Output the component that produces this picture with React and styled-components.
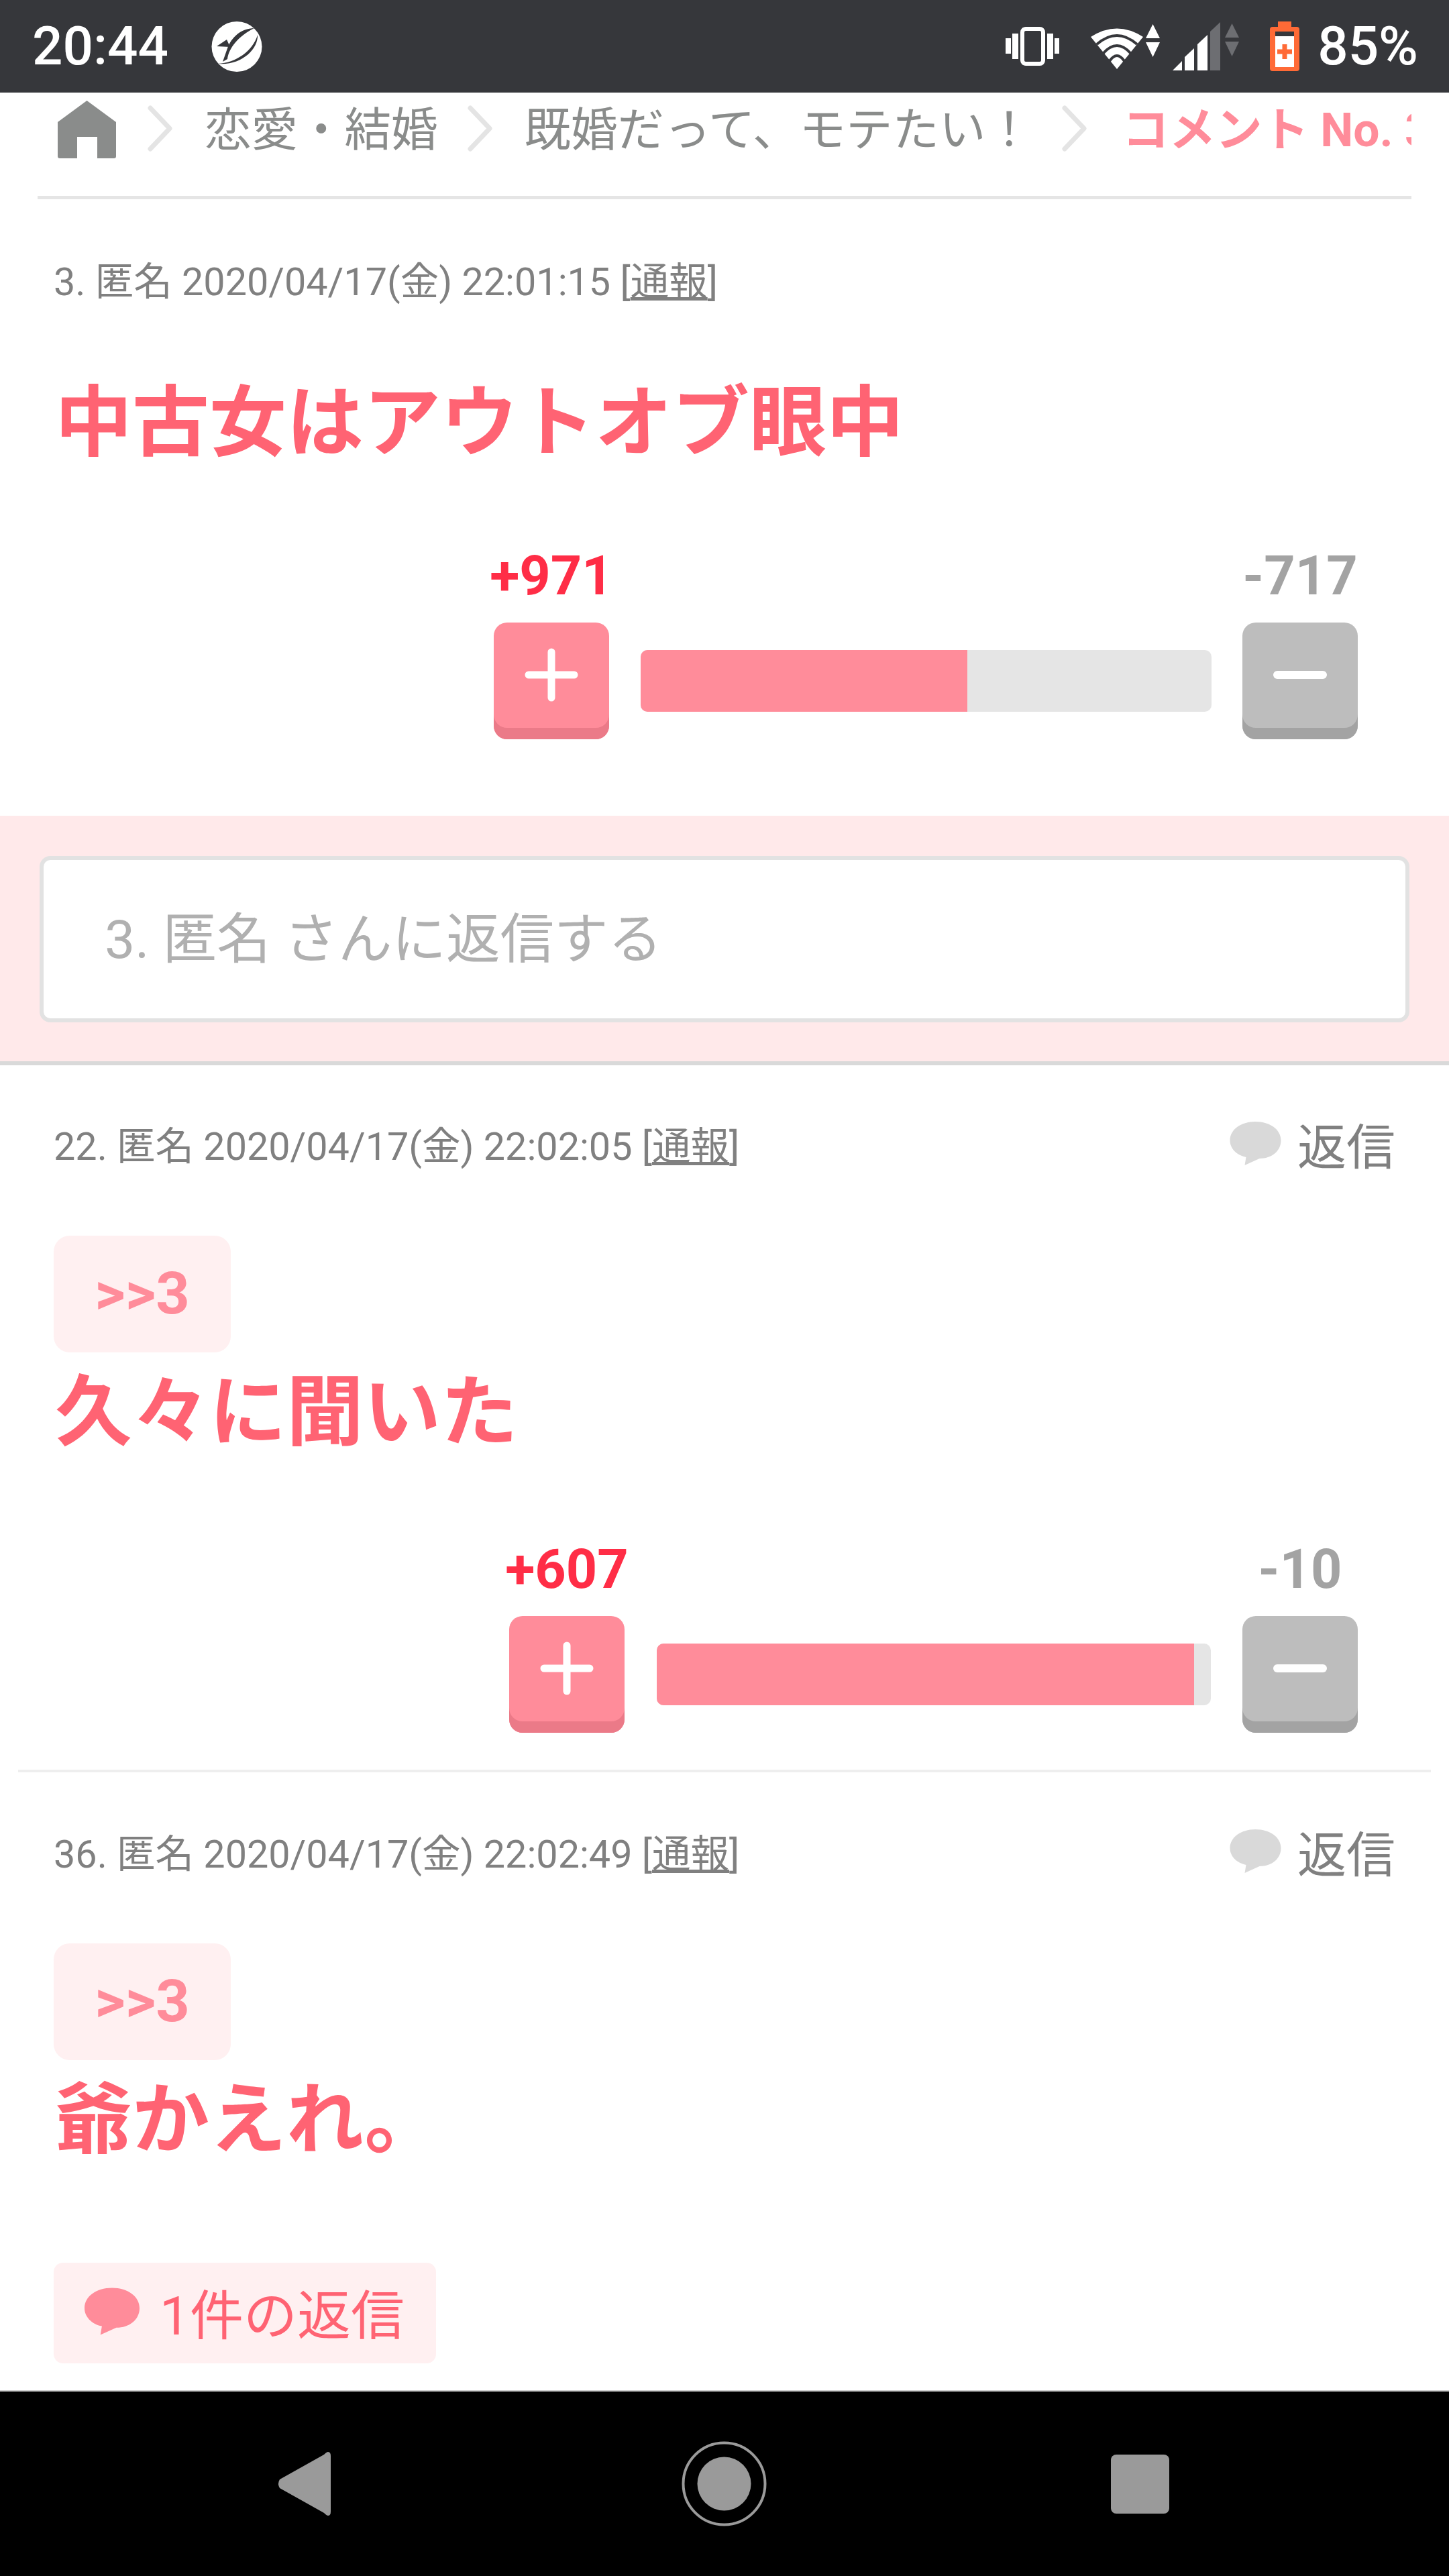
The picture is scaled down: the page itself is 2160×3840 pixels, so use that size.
import React from 'react';
import styled, {createGlobalStyle} from 'styled-components';

const GlobalStyle = createGlobalStyle`
	html, body {
		margin: 0;
		padding: 0;
		background: #fff;
	}
	* {
		box-sizing: border-box;
	}
`;

const Screen = styled.div`
	width: 2160px;
	height: 3840px;
	display: flex;
	flex-direction: column;
	overflow: hidden;
	font-family: Roboto, "Noto Sans CJK JP", sans-serif;
`;
const StatusBar = styled.div`
	height: 138px;
	flex: none;
	display: flex;
	align-items: center;
	padding: 0 46px 0 48px;
	background: #36373b;
	color: #fff;
	font-size: 80px;
	font-weight: 500;
`;
const StatusText = styled.span`
	line-height: 1;
`;
const LogoMark = styled.svg`
	margin-left: 64px;
`;
const StatusIcons = styled.div`
	margin-left: auto;
	display: flex;
	align-items: center;
`;
const StatusIcon = styled.svg`
	margin-right: ${p => p.$right || 0}px;
`;
const Main = styled.div`
	flex: 1;
	min-height: 0;
	overflow: hidden;
	background: #fff;
`;
const Breadcrumb = styled.nav`
	height: 159px;
	margin: 0 56px;
	padding: 10px 0 0 30px;
	display: flex;
	align-items: flex-start;
	overflow: hidden;
	border-bottom: 5px solid #e5e5e5;
	font-size: 69.5px;
	line-height: 86px;
	white-space: nowrap;
	color: #8a8c8b;
`;
const HomeMark = styled.svg`
	flex: none;
	margin: 2px 3px 0 0;
`;
const Crumb = styled.span`
	flex: none;
	margin: 4px 0 0 47px;
`;
const CurrentCrumb = styled(Crumb)`
	margin-left: 52px;
	font-weight: 700;
	color: #ff8c9a;
`;
const CrumbArrow = styled.svg`
	flex: none;
	margin: 9px 0 0 44px;
`;
const Comment = styled.section`
	padding: ${p => p.$top}px 80px 0 80px;
`;
const Meta = styled.div`
	display: flex;
	justify-content: space-between;
	align-items: center;
	height: 66px;
	font-size: 57.500px;
	color: #808080;
	white-space: nowrap;
`;
const Report = styled.span`
	text-decoration: underline;
`;
const ReplyLink = styled.span`
	display: flex;
	align-items: center;
	gap: 24px;
	font-size: 73px;
	color: #808080;
`;
const Quote = styled.div`
	width: 264px;
	height: 174px;
	margin-top: 105px;
	display: flex;
	align-items: center;
	justify-content: center;
	padding-bottom: 3px;
	border-radius: 24px;
	background: #fff0f1;
	color: #ff8c9a;
	font-size: 88px;
	font-weight: 700;
`;
const Body = styled.div`
	margin-top: ${p => p.$top}px;
	padding-left: 2px;
	font-size: 115px;
	line-height: 122px;
	font-weight: 700;
	color: #ff6373;
	white-space: nowrap;
`;
const Votes = styled.div`
	width: ${p => p.$width}px;
	margin: ${p => p.$top}px 56px 0 auto;
`;
const Counts = styled.div`
	display: flex;
	justify-content: space-between;
	font-size: 81px;
	line-height: 84px;
	font-weight: 700;
`;
const Count = styled.span`
	width: 172px;
	display: flex;
	justify-content: center;
	white-space: nowrap;
	color: ${p => p.$color};
`;
const VoteRow = styled.div`
	margin-top: 27px;
	display: flex;
	align-items: center;
	justify-content: space-between;
`;
const VoteButton = styled.div`
	width: 172px;
	height: 174px;
	flex: none;
	display: flex;
	align-items: center;
	justify-content: center;
	padding-bottom: 18px;
	border-radius: 20px;
	background: ${p => p.$color};
	box-shadow: inset 0 -17px 0 ${p => p.$shade};
`;
const Bar = styled.div`
	width: ${p => p.$width}px;
	height: 92px;
	overflow: hidden;
	border-radius: 10px;
	background: #e5e5e5;
`;
const BarFill = styled.div`
	height: 100%;
	background: #ff8c9a;
`;
const ReplyBand = styled.div`
	margin-top: 114px;
	padding: 60px 59px 58px;
	background: #ffe9ea;
	border-bottom: 6px solid #d9d9d9;
`;
const ReplyInput = styled.div`
	height: 248px;
	display: flex;
	align-items: center;
	padding: 0 0 14px 91px;
	background: #fff;
	border: 6px solid #e2e2e2;
	border-radius: 16px;
	font-size: 80.500px;
	color: #b0b0b0;
`;
const Divider = styled.hr`
	margin: 55px 27px 0;
	border: none;
	border-top: 4px solid #eeeeee;
`;
const RepliesPill = styled.div`
	width: 570px;
	height: 150px;
	margin-top: 151px;
	display: flex;
	align-items: center;
	gap: 30px;
	padding: 0 0 6px 46px;
	border-radius: 14px;
	background: #fff0f1;
	color: #ff6373;
	font-size: 80px;
`;
const NavBar = styled.div`
	height: 277px;
	flex: none;
	display: flex;
	align-items: center;
	background: #000;
	border-top: 2px solid #cfcfcf;
`;
const NavIcon = styled.svg`
	margin-left: ${p => p.$left}px;
`;

const Logo = () => (
	<LogoMark width="76" height="75" viewBox="0 0 76 75">
		<circle cx="38" cy="37.500" r="37.500" fill="#fff" />
		<path d="M10 63C36 62 62 44 69 20C70 42 44 66 10 63Z" fill="#36373b" />
		<path d="M64 10C44 10 30 24 24 40L17 60L24 56C26 40 40 22 64 10Z" fill="#36373b" />
		<path d="M8 37L23 27L28 38Z" fill="#36373b" />
	</LogoMark>
);

const VibrateIcon = () => (
	<StatusIcon width="80" height="58" viewBox="0 0 80 58" $right={47}>
		<rect x="25" y="3" width="31" height="52" rx="5" fill="none" stroke="#fff" strokeWidth="6" />
		<path d="M10 10H19V48H10ZM0 17H8V40H0ZM62 10H71V48H62ZM73 17H80V40H73Z" fill="#fff" />
	</StatusIcon>
);

const WifiIcon = () => (
	<StatusIcon width="103" height="67" viewBox="0 0 103 67" $right={19}>
		<path d="M0 19Q39 -6 78 19L39 67Z" fill="#fff" />
		<path d="M9 30Q39 4 69 30M18 44Q39 20 60 44M28 55Q39 39 50 55" fill="none" stroke="#36373b" strokeWidth="4" />
		<path d="M92.500 0L103 21H82ZM92.500 49L103 27H82Z" fill="#fff" />
	</StatusIcon>
);

const SignalIcon = () => (
	<StatusIcon width="99" height="72" viewBox="0 0 99 72" $right={46}>
		<path d="M0 72L14 58V72ZM18 52L32 39V72H18ZM37 33L52 19V72H37Z" fill="#fff" />
		<path d="M56 14L71 0V72H56Z" fill="#6d6e72" />
		<path d="M88.500 2L99 23H78ZM88.500 51L99 29H78Z" fill="#6d6e72" />
	</StatusIcon>
);

const BatteryIcon = () => (
	<StatusIcon width="44" height="74" viewBox="0 0 44 74" $right={27}>
		<path d="M12 0H32V8H40Q44 8 44 12V70Q44 74 40 74H4Q0 74 0 70V12Q0 8 4 8H12Z" fill="#ff6a36" />
		<rect x="8" y="15" width="28" height="7" fill="#36373b" />
		<rect x="8" y="22" width="28" height="46" fill="#fff" />
		<path d="M22 34V56M11 45H33" stroke="#ff6a36" strokeWidth="7" />
	</StatusIcon>
);

const HomeIcon = () => (
	<HomeMark width="87" height="86" viewBox="0 0 87 86">
		<path d="M43.500 0L87 32V83Q87 86 84 86H59V54H29V86H3Q0 86 0 83V32Z" fill="#8a8c8b" />
	</HomeMark>
);

const Chevron = () => (
	<CrumbArrow width="38" height="69" viewBox="0 0 38 69" fill="none">
		<path d="M4 4L33 34.500L4 65" stroke="#e4e4e4" strokeWidth="7" strokeLinecap="round" strokeLinejoin="round" />
	</CrumbArrow>
);

const Bubble = ({color, width, height}) => (
	<svg width={width} height={height} viewBox="0 0 76 65">
		<path d="M38 0C60 0 76 12 76 28C76 44 62 55 44 55L22 65L24 53C10 50 0 40 0 28C0 12 16 0 38 0Z" fill={color} />
	</svg>
);

const PlusMark = () => (
	<svg width="80" height="80" viewBox="0 0 80 80">
		<path d="M40 6V74M6 40H74" stroke="#fff" strokeWidth="11" strokeLinecap="round" />
	</svg>
);

const MinusMark = () => (
	<svg width="80" height="12" viewBox="0 0 80 12">
		<path d="M6 6H74" stroke="#fff" strokeWidth="12" strokeLinecap="round" />
	</svg>
);

const VoteBox = ({plus, minus, barWidth, fill, width, top}) => (
	<Votes $width={width} $top={top}>
		<Counts>
			<Count $color="#ff2d46">{plus}</Count>
			<Count $color="#a3a3a3">{minus}</Count>
		</Counts>
		<VoteRow>
			<VoteButton $color="#ff8c9a" $shade="#eb7a88"><PlusMark /></VoteButton>
			<Bar $width={barWidth}>
				<BarFill style={{width: `${fill}%`}} />
			</Bar>
			<VoteButton $color="#bdbdbd" $shade="#a3a3a3"><MinusMark /></VoteButton>
		</VoteRow>
	</Votes>
);

const Reply = () => (
	<ReplyLink>
		<Bubble color="#d9d9d9" width="77" height="65" />
		返信
	</ReplyLink>
);

export default function App() {
	return (
		<Screen>
			<GlobalStyle />
			<StatusBar>
				<StatusText>20:44</StatusText>
				<Logo />
				<StatusIcons>
					<VibrateIcon />
					<WifiIcon />
					<SignalIcon />
					<BatteryIcon />
					<StatusText>85%</StatusText>
				</StatusIcons>
			</StatusBar>
			<Main>
				<Breadcrumb>
					<HomeIcon />
					<Chevron />
					<Crumb>恋愛・結婚</Crumb>
					<Chevron />
					<Crumb>既婚だって、モテたい！</Crumb>
					<Chevron />
					<CurrentCrumb>コメント No. 3</CurrentCrumb>
				</Breadcrumb>

				<Comment $top={85}>
					<Meta>
						<span>3. 匿名 2020/04/17(金) 22:01:15 [<Report>通報</Report>]</span>
					</Meta>
					<Body $top={122}>中古女はアウトオブ眼中</Body>
					<VoteBox plus="+971" minus="-717" barWidth={851} fill={57.300} width={1288} top={125} />
				</Comment>
				<ReplyBand>
					<ReplyInput>3. 匿名 さんに返信する</ReplyInput>
				</ReplyBand>

				<Comment $top={83}>
					<Meta>
						<span>22. 匿名 2020/04/17(金) 22:02:05 [<Report>通報</Report>]</span>
						<Reply />
					</Meta>
					<Quote>&gt;&gt;3</Quote>
					<Body $top={29}>久々に聞いた</Body>
					<VoteBox plus="+607" minus="-10" barWidth={826} fill={97} width={1265} top={131} />
				</Comment>
				<Divider />

				<Comment $top={84}>
					<Meta>
						<span>36. 匿名 2020/04/17(金) 22:02:49 [<Report>通報</Report>]</span>
						<Reply />
					</Meta>
					<Quote>&gt;&gt;3</Quote>
					<Body $top={29}>爺かえれ。</Body>
					<RepliesPill>
						<Bubble color="#ff8c9a" width="82" height="71" />
						1件の返信
					</RepliesPill>
				</Comment>
			</Main>
			<NavBar>
				<NavIcon width="80" height="95" viewBox="0 0 80 95" $left={413}>
					<path d="M76 0Q80 0 80 6V89Q80 95 76 95Q74 95 70 91L4 54Q0 47.500 4 41L70 4Q74 0 76 0Z" fill="#9a9a9a" />
				</NavIcon>
				<NavIcon width="127" height="127" viewBox="0 0 127 127" $left={523}>
					<circle cx="63.500" cy="63.500" r="61" fill="none" stroke="#9a9a9a" strokeWidth="4" />
					<circle cx="63.500" cy="63.500" r="40" fill="#9a9a9a" />
				</NavIcon>
				<NavIcon width="87" height="88" viewBox="0 0 87 88" $left={513}>
					<rect width="87" height="88" rx="8" fill="#9a9a9a" />
				</NavIcon>
			</NavBar>
		</Screen>
	);
}
